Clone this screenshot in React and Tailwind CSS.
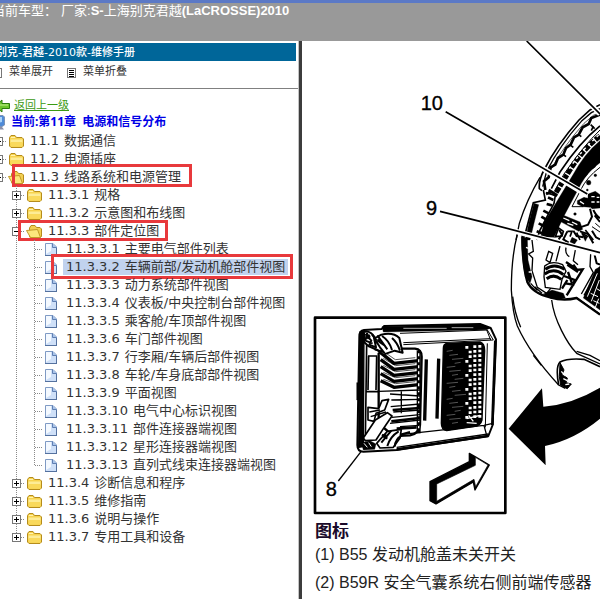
import React from 'react';

const nodes = [
  { level: 1, no: '11.1', title: '数据通信', icon: 'folder', state: 'plus' },
  { level: 1, no: '11.2', title: '电源插座', icon: 'folder', state: 'plus' },
  { level: 1, no: '11.3', title: '线路系统和电源管理', icon: 'open', state: 'minus', mark: 'system' },
  { level: 2, no: '11.3.1', title: '规格', icon: 'folder', state: 'plus' },
  { level: 2, no: '11.3.2', title: '示意图和布线图', icon: 'folder', state: 'plus' },
  { level: 2, no: '11.3.3', title: '部件定位图', icon: 'open', state: 'minus', mark: 'location' },
  { level: 3, no: '11.3.3.1', title: '主要电气部件列表', icon: 'file' },
  { level: 3, no: '11.3.3.2', title: '车辆前部/发动机舱部件视图', icon: 'file', selected: true, mark: 'view' },
  { level: 3, no: '11.3.3.3', title: '动力系统部件视图', icon: 'file' },
  { level: 3, no: '11.3.3.4', title: '仪表板/中央控制台部件视图', icon: 'file' },
  { level: 3, no: '11.3.3.5', title: '乘客舱/车顶部件视图', icon: 'file' },
  { level: 3, no: '11.3.3.6', title: '车门部件视图', icon: 'file' },
  { level: 3, no: '11.3.3.7', title: '行李厢/车辆后部件视图', icon: 'file' },
  { level: 3, no: '11.3.3.8', title: '车轮/车身底部部件视图', icon: 'file' },
  { level: 3, no: '11.3.3.9', title: '平面视图', icon: 'file' },
  { level: 3, no: '11.3.3.10', title: '电气中心标识视图', icon: 'file' },
  { level: 3, no: '11.3.3.11', title: '部件连接器端视图', icon: 'file' },
  { level: 3, no: '11.3.3.12', title: '星形连接器端视图', icon: 'file' },
  { level: 3, no: '11.3.3.13', title: '直列式线束连接器端视图', icon: 'file', last: true },
  { level: 2, no: '11.3.4', title: '诊断信息和程序', icon: 'folder', state: 'plus' },
  { level: 2, no: '11.3.5', title: '维修指南', icon: 'folder', state: 'plus' },
  { level: 2, no: '11.3.6', title: '说明与操作', icon: 'folder', state: 'plus' },
  { level: 2, no: '11.3.7', title: '专用工具和设备', icon: 'folder', state: 'plus', last: true },
];

// red frames drawn over the tree
const marks = {
  system: 'left-[23px] -top-1 w-[180px] h-[23px]',
  location: 'left-[29px] -top-0.5 w-[150px] h-[21px]',
  view: 'left-[62px] -top-1 w-[242px] h-[25px]',
};

const Guide = ({ tee, last }) => (
  <svg width="18" height="18" viewBox="0 0 18 18" className="shrink-0" stroke="#8a8a8a" strokeDasharray="1 1">
    <path d={last ? 'M9.5 0V9' : 'M9.5 0V18'} />
    {tee && <path d="M10 9.5H18" />}
  </svg>
);

const Expander = ({ state, first, last, label }) => (
  <button type="button" aria-label={label} className="shrink-0">
    <svg width="18" height="18" viewBox="0 0 18 18">
      <g stroke="#8a8a8a" strokeDasharray="1 1">
        {!first && <path d={last ? 'M9.5 0V9' : 'M9.5 0V18'} />}
        <path d="M14 9.5H18" />
      </g>
      <rect x="5.5" y="5.5" width="8" height="8" fill="#fff" stroke="#777" />
      <path d={state === 'plus' ? 'M7 9.5H12M9.5 7V12' : 'M7 9.5H12'} stroke="#000" />
    </svg>
  </button>
);

const Folder = () => (
  <svg width="18" height="18" viewBox="0 0 18 18" className="shrink-0">
    <path d="M2.5 14V5.5L4 3.5H8L9.5 5.5H15L16.5 7V14L15 15.5H4Z" fill="#f7d34f" stroke="#b58c1c" />
    <path d="M3.5 7.5H15.5V11H3.5Z" fill="#fdec96" />
    <path d="M3.5 10H15.5V14.5H4Z" fill="#f9d95c" />
    <path d="M4 5.5H8" stroke="#fff3b0" />
  </svg>
);

const OpenFolder = () => (
  <svg width="18" height="18" viewBox="0 0 18 18" className="shrink-0">
    <path d="M4.5 14V6L6 3.5H10L11.5 5.5H15L16.5 7V14.5L15 15.5H5Z" fill="#f2cf52" stroke="#b58c1c" />
    <path d="M1.5 8.5L12.5 7.5L15.5 15.5H5.5Z" fill="#fce67c" stroke="#c29a28" />
  </svg>
);

const FileIcon = () => (
  <svg width="18" height="18" viewBox="0 0 18 18" className="shrink-0">
    <path d="M2.5 3.5H10L13.5 7V15.5H2.5Z" fill="#cfe0f8" stroke="#7f9ac4" />
    <path d="M3 4H8V11L3 14Z" fill="#f4f9ff" />
    <path d="M9.5 3.5V7.5H13.5" fill="#a9c4ea" stroke="#5f7fb2" />
    <path d="M2 15.5H14M13.5 8V15" stroke="#54719f" />
  </svg>
);

const icons = { folder: Folder, open: OpenFolder, file: FileIcon };

const TreeRow = ({ node, first }) => {
  const Icon = icons[node.icon];
  return (
    <li className="relative flex h-[18px] items-center">
      {node.level > 1 && <span className="w-[18px] shrink-0" />}
      {node.level === 3 && (
        <>
          <Guide />
          <Guide tee last={node.last} />
        </>
      )}
      {node.state && <Expander state={node.state} first={first} last={node.last} label={node.no} />}
      <Icon />
      <a
        href="#figure"
        className={
          'ml-0.5 flex items-center gap-[5px] px-[3px] text-[13px] leading-4 whitespace-nowrap text-[#333] ' +
          (node.selected ? 'bg-[#c1d2ee]' : '')
        }
      >
        <span>{node.no}</span>
        <span>{node.title}</span>
      </a>
      {node.mark && <span className={'pointer-events-none absolute border-3 border-[#e8393c] ' + marks[node.mark]} />}
    </li>
  );
};

const ListIcon = () => (
  <svg width="9" height="10" viewBox="0 0 9 10" className="shrink-0" fill="none">
    <rect x="0.5" y="0.5" width="8" height="9" stroke="#777" />
    <path d="M2 2.5H7M2 4.5H7M2 6.5H7M2 8.5H7" stroke="#000" />
  </svg>
);

const Sidebar = () => (
  <nav className="w-[299px] shrink-0 overflow-hidden border-r border-[#c4c4c4] pt-0.5 font-['DejaVu_Sans','Noto_Sans_CJK_SC',sans-serif]">
    <h1 className="mr-0.5 h-[18px] bg-[#006699] text-[11px] leading-5 font-medium whitespace-nowrap text-white">
      <span className="-ml-1">别克-君越-2010款-维修手册</span>
    </h1>
    <div className="-ml-[7px] flex h-[28px] items-center gap-[14px] border-b border-[#808080] pb-1 text-[11px] text-[#333]">
      <button type="button" className="flex items-center gap-[7px]">
        <ListIcon />
        菜单展开
      </button>
      <button type="button" className="flex items-center gap-[7px]">
        <ListIcon />
        菜单折叠
      </button>
    </div>
    <div className="-ml-1.5 mt-[9px] flex h-4 items-center gap-1">
      <svg width="16" height="14" viewBox="0 0 16 14" className="shrink-0">
        <path d="M1 7L8 1V4.5H15.5V9.5H8V13Z" fill="#6cc72c" stroke="#2c7d0c" />
        <path d="M5 6H14" stroke="#c4f08c" />
      </svg>
      <a href="#top" className="text-[11px] leading-4 text-[#3b9a12] underline">返回上一级</a>
    </div>
    <div className="-ml-[11px] flex h-4 items-center gap-1.5">
      <svg width="16" height="16" viewBox="0 0 16 16" className="shrink-0">
        <path d="M3 1.5H14L15.5 3V11L13 12.5H3Z" fill="#4f8bd8" stroke="#7c93b4" />
        <path d="M5 3H13V8L5 10Z" fill="#a9d3f8" />
        <path d="M4 13H13L15 15.5H3Z" fill="#8b8fa8" />
      </svg>
      <strong className="text-[12px] leading-4 whitespace-nowrap text-[#0000e6] font-['Noto_Sans','Noto_Sans_CJK_SC',sans-serif]">
        当前:第11章&nbsp; 电源和信号分布
      </strong>
    </div>
    <ul className="-ml-[11px] mt-0.5">
      {nodes.map((node, i) => (
        <TreeRow key={node.no} node={node} first={i === 0} />
      ))}
    </ul>
  </nav>
);

const fins = [0, 1, 2, 3, 4];
const gridRows = Array.from({ length: 16 }, (_, i) => i);
const meshRows = Array.from({ length: 19 }, (_, i) => i);

const ControlModule = () => (
  <g transform="translate(900 930)" fill="none" stroke="#000" strokeLinejoin="round">
    <rect x="45" y="23" width="571" height="586" strokeWidth="8" fill="#fff" />
    {/* housing */}
    <path d="M192 60L245 57L252 48L540 42L572 54L588 88L578 345L565 378L290 420L190 425Q172 425 172 405L178 80Q178 62 192 60Z" fill="#fff" strokeWidth="6" />
    <path d="M246 50L540 42L572 54L560 59L250 66Z" fill="#000" />
    <path d="M310 55H440M455 53H520" stroke="#fff" strokeWidth="2" />
    <path d="M180 66L192 64L190 410L176 412Z" fill="#000" strokeWidth="4" />
    <path d="M170 218H184V270H170Z" fill="#000" />
    <path d="M300 70L562 60L580 90L310 104M310 98L572 86M560 60L572 90M556 352L562 100" strokeWidth="3" />
    <path d="M300 374L552 346L578 340M552 346L560 376M290 412L565 372" strokeWidth="4" />
    <path d="M290 418L400 402L565 378" strokeWidth="8" />
    <path d="M586 92L577 345" strokeWidth="8" />
    {/* left chamber */}
    <path d="M200 105L196 390M206 138L204 240M230 140L228 240M196 245H236M204 138H232" strokeWidth="5" />
    <path d="M300 116H345Q365 118 365 140L360 345Q356 372 330 376L280 378L236 340V130Z" strokeWidth="7" />
    {fins.map((i) => (
      <g key={i}>
        <path d={`M242 ${128 + i * 21}L282 ${160 + i * 18}L356 ${152 + i * 18}`} strokeWidth="10" />
        <path d={`M250 ${124 + i * 21}L286 ${149 + i * 18}L346 ${143 + i * 18}`} strokeWidth="2" />
      </g>
    ))}
    <path d="M356 122V370" strokeWidth="12" />
    <path d="M356 130V360" stroke="#fff" strokeWidth="4" strokeDasharray="9 9" />
    <path d="M236 244L360 240M270 252L360 258M274 270L360 268M272 290L360 282M280 306L360 300M276 322L360 314M270 340L360 330M300 350L358 346M304 244V310" strokeWidth="4" />
    <path d="M278 300L360 294M274 334L360 324M290 356L350 352" strokeWidth="8" />
    {/* upper bracket */}
    <path d="M192 66Q210 60 226 84L244 74Q280 66 298 84L308 128L284 122L250 134L232 120L205 108L192 96Z" fill="#fff" strokeWidth="6" />
    <path d="M196 72L214 92L208 104L228 112L222 84L240 112L254 130M202 68L196 92L218 100M232 76L262 118M246 78Q268 92 276 120M276 84Q292 98 300 122M238 96L256 108M216 74L230 92M224 118L250 126" strokeWidth="6" />
    <circle cx="204" cy="80" r="7" fill="#000" />
    <circle cx="236" cy="92" r="5" fill="#000" />
    {/* lower tabs */}
    <path d="M204 292L236 296L246 272L266 268L254 300L228 310L222 334L204 330Z" fill="#fff" strokeWidth="5" />
    <path d="M190 384L226 330L262 308L276 318L250 356L228 390L196 392Z" fill="#fff" strokeWidth="5" />
    <path d="M230 400L262 364L304 358L300 384L280 412L240 414Z" fill="#fff" strokeWidth="5" />
    <path d="M244 398L274 362M262 408Q270 380 296 364M284 410Q286 386 306 376M246 374L262 386M300 374L330 366" strokeWidth="6" />
    <path d="M208 306L240 300M212 320L258 306" strokeWidth="4" />
    <circle cx="254" cy="378" r="6" fill="#000" />
    <path d="M184 398L210 392L228 402L224 418L190 420Z" fill="#000" />
    <path d="M192 400L202 412M206 398L214 410" stroke="#fff" strokeWidth="3" />
    {/* centre ribs */}
    <path d="M379 148L374 332M416 146L411 326" strokeWidth="10" />
    {/* right chamber */}
    <path d="M440 100L540 96Q554 100 554 122L546 330Q542 348 520 350L440 362Q424 360 424 340L430 115Q430 102 440 100Z" fill="#000" strokeWidth="4" />
    {gridRows.map((i) => (
      <path key={i} d={`M${i % 3 ? 506 : 496} ${112 + i * 14}h9M520 ${110 + i * 14}h9M535 ${109 + i * 14}h9`} stroke="#fff" strokeWidth="8" />
    ))}
    {meshRows.map((i) => (
      <path key={i} d={`M${440 + (i % 4) * 8} ${124 + i * 12}l${18 + (i % 3) * 8} -3`} stroke="#fff" strokeWidth="1" />
    ))}
    <path d="M500 326L540 316M500 338L530 340M506 316L520 334" stroke="#fff" strokeWidth="4" />
    {/* leader line and view arrow */}
    <path d="M183 425L115 513" strokeWidth="4" />
    <path d="M390 515L508 455V430L525 440L568 465L525 540L520 516L408 582L390 572Z" fill="#000" strokeWidth="4" />
    <path d="M410 522L526 466V442L564 465L527 530L522 508L410 574Z" fill="#fff" strokeWidth="2" />
  </g>
);

const Fender = () => (
  <>
    <g transform="translate(1440 270)" fill="none" stroke="#000">
      {/* outer seams */}
      <path d="M360 44L330 60L297 90Q230 165 192 240Q176 270 178 296L186 302" strokeWidth="5" />
      <path d="M360 56L334 68L304 94Q240 165 200 244L188 290" strokeWidth="4" />
      <path d="M360 68L340 76L312 100Q250 170 214 236" strokeWidth="2" />
      <path d="M180 262Q140 330 118 400L108 450" strokeWidth="4" />
      <path d="M360 74L334 84L326 102L308 112L296 134L282 142L272 164L258 174L250 194L234 204L226 224L212 232L206 262L192 274L196 300" strokeWidth="8" />
      <path d="M332 104L344 116M340 108L334 122M296 134L304 140M272 166L280 172M250 194L258 200" strokeWidth="5" />
      <path d="M360 108Q300 156 240 246L214 296" strokeWidth="5" />
      <path d="M360 120Q310 168 252 252L224 302" strokeWidth="3" />
      {/* dashed weld strip */}
      <path d="M360 138Q310 176 270 240L222 318" strokeWidth="15" strokeDasharray="18 4" />
      <path d="M356 136Q308 176 268 236" stroke="#fff" strokeWidth="4" strokeDasharray="8 10" />
      {/* main rail */}
      <path d="M360 152Q312 192 278 256L192 398L182 440L222 442L254 374L304 280Q324 244 360 218Z" fill="#000" />
      <path d="M360 232Q320 262 302 300L276 350L310 350" strokeWidth="3" />
      <path d="M190 300L196 330L160 338L136 430L128 450M198 308L226 316L222 340L180 420L170 450" strokeWidth="5" />
      <path d="M162 340L148 392L136 450L150 450L162 400L176 344Z" fill="#000" />
      <path d="M204 322L220 330M200 342L216 346M190 362L206 370M184 380L198 388M176 400L192 408M198 312L214 306M206 300L232 316M170 424L186 430" strokeWidth="8" />
      <path d="M346 228L336 236M322 250L312 262" strokeWidth="5" />
      {/* strut mount */}
      <path d="M292 332L312 322L330 326V352L308 350L292 342Z" fill="#000" />
      <path d="M324 312L346 304L360 314V354L336 356L324 344Z" fill="#000" />
      <path d="M334 320H344M350 322H358M334 336H344M350 336H358M300 334L312 342" stroke="#fff" strokeWidth="4" />
      <circle cx="326" cy="278" r="7" fill="#000" />
      <circle cx="346" cy="256" r="4" fill="#000" />
      <circle cx="322" cy="300" r="3" fill="#000" />
      <circle cx="285" cy="372" r="4" fill="#000" />
      <path d="M330 356L336 380L324 404L300 412M340 360Q350 380 360 384M344 376L360 396" strokeWidth="6" />
      <path d="M236 374L256 378L300 396L308 418L296 424L240 394Z" fill="#000" />
      <path d="M250 384L268 392M276 396L292 404M262 400L280 406" stroke="#fff" strokeWidth="4" />
      <path d="M236 414L226 440L246 438L250 424ZM262 424H276L270 440M290 428L300 450M306 430L324 440M316 420L340 450" strokeWidth="5" />
      <path d="M336 410L360 426M346 400L360 412" strokeWidth="3" />
    </g>
    <g transform="translate(1440 690)" fill="none" stroke="#000">
      {/* fender skin */}
      <path d="M112 14Q94 80 94 180Q98 250 112 288Q150 372 236 465L256 475" strokeWidth="4" />
      <path d="M98 200Q104 250 122 292M160 376L184 406" strokeWidth="4" />
      <path d="M215 210C222 270 262 342 290 370L360 402M290 364L330 376L360 392" strokeWidth="4" />
      <path d="M236 465Q226 410 240 396Q262 384 312 388L360 410" strokeWidth="5" />
      <path d="M240 398L252 420L246 434L262 444L258 458L274 462L262 476L242 466L238 440Z" fill="#000" strokeWidth="3" />
      <path d="M244 424L254 436M250 446L262 452M256 464L268 462" stroke="#fff" strokeWidth="4" />
      {/* engine bay edge */}
      <path d="M128 14Q126 100 142 156Q158 190 210 202Q250 214 290 204L360 254" strokeWidth="7" />
      <path d="M124 20L142 24L144 90L156 140L150 160L136 140Q124 80 124 20Z" fill="#000" />
      <path d="M156 30L160 64L146 72L158 84L156 122L172 172L200 190L216 170" strokeWidth="4" />
      <path d="M146 126H156M138 52L148 56" stroke="#fff" strokeWidth="4" />
      <path d="M190 192L216 180L250 190L256 204L214 206Z" fill="#000" />
      <path d="M164 170L186 190M152 160L172 182" strokeWidth="4" />
      {/* reservoir */}
      <path d="M206 64L218 70L210 98L198 90ZM240 48L228 94" strokeWidth="4" />
      <path d="M194 108Q216 90 248 104L258 124L246 148L240 178L196 172L192 140Z" fill="#fff" strokeWidth="4" />
      <path d="M196 118Q222 98 254 118M194 132Q222 112 250 134M200 146Q222 130 244 148" strokeWidth="9" />
      <path d="M204 136Q222 124 240 138" stroke="#fff" strokeWidth="3" />
      <path d="M258 96L290 118L280 104M262 104L294 126M252 138L284 150L280 164L256 160M264 126L276 160M246 176L262 150M286 120L308 118L260 196" strokeWidth="7" />
      <path d="M262 38Q250 70 268 80M286 60L280 92L294 104" strokeWidth="4" />
      {/* engine block */}
      <path d="M332 72L330 110L340 128L304 192M360 110L312 196M290 204L360 252" strokeWidth="4" />
      <path d="M346 118L360 110V240L310 204Z" fill="#000" />
      <path d="M352 130L322 200M358 150L334 214M350 176L360 182M332 190L354 200M340 212L358 220M356 206L346 232" stroke="#fff" strokeWidth="3" />
      <path d="M186 2L206 12M216 4L212 20M238 0L246 14L236 28M262 4L250 28L266 38M280 2L290 18L310 22M300 4L324 12L340 40M336 2L348 22L360 28M344 76L350 100L360 104" strokeWidth="6" />
      <path d="M276 22L292 30L284 42L270 36ZM304 10L322 22L316 34Z" fill="#000" />
      {/* pointer to the module */}
      <path d="M86 596L186 475L190 530Q280 524 372 466V556Q290 628 195 648L197 706Z" fill="#000" stroke="none" />
    </g>
  </>
);

const Figure = () => (
  <svg id="figure" width="298" height="474" viewBox="906 123 894 1422" className="shrink-0" role="img" aria-label="发动机舱部件视图">
    <Fender />
    <g fill="none">
      <path d="M1700 240L1800 342M1400 366L1762 586M1400 654L1800 762" stroke="#fff" strokeWidth="16" />
      <path d="M1580 123L1800 342M1337 335L1762 582M1320 634L1440 664L1800 758" stroke="#000" strokeWidth="5" />
    </g>
    <ControlModule />
    <g fontSize="60" stroke="#000" strokeWidth="1" className="font-['Liberation_Sans',Arial,sans-serif]">
      <text x="1262" y="331">10</text>
      <text x="1278" y="645">9</text>
      <text x="977" y="1487">8</text>
    </g>
  </svg>
);

const App = () => {
  return (
    <div className="flex min-h-screen flex-col overflow-x-hidden bg-white">
      <header className="h-[41px] shrink-0 overflow-hidden border-t-3 border-[#5b79c6] bg-[#999999] text-[13px] leading-4 whitespace-nowrap text-white font-['Liberation_Sans','Noto_Sans_CJK_SC',sans-serif]">
        <div className="-ml-2 flex">
          <span>当前车型：</span>
          <span className="ml-1">厂家:</span>
          <b>S-</b>
          <span>上海别克君越</span>
          <b>(LaCROSSE)2010</b>
        </div>
      </header>

      <div className="flex flex-1">
        <Sidebar />
        <main className="min-w-0 flex-1 overflow-hidden border-l-3 border-[#3c3c3c] font-['Liberation_Sans','Noto_Sans_CJK_SC',sans-serif]">
          <Figure />
          <div className="px-[13px] text-[16px] leading-7 whitespace-nowrap text-[#222]">
            <h2 className="pt-2 text-[17px] leading-[18px] font-bold text-[#1a0a2a]">图标</h2>
            <p>(1) B55 发动机舱盖未关开关</p>
            <p>(2) B59R 安全气囊系统右侧前端传感器</p>
          </div>
        </main>
      </div>
    </div>
  );
};

export default App;
